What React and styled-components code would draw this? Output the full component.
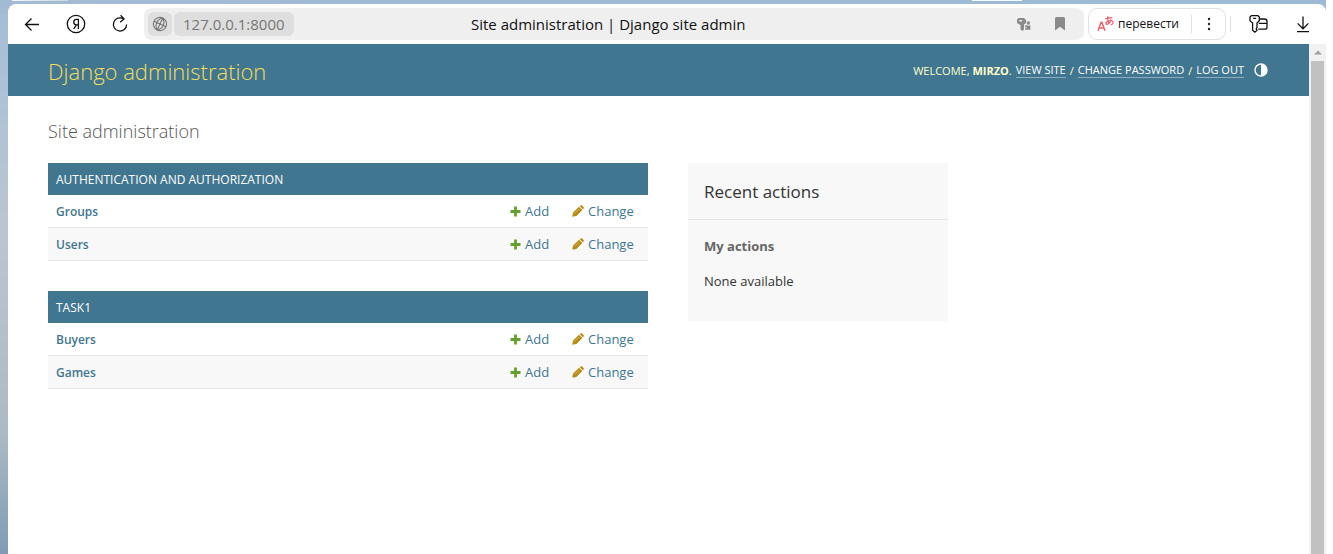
import React from "react";
import styled, { createGlobalStyle } from "styled-components";

const GlobalStyle = createGlobalStyle`
  *, *::before, *::after { box-sizing: border-box; }
  html, body { margin: 0; padding: 0; background: #fff; }
  body { font-family: "Open Sans", "Noto Sans", sans-serif; font-size: 13px; color: #333; }
  button, input { font: inherit; }
  h1, h2, h3, p { margin: 0; font-weight: 400; }
  a { text-decoration: none; }
`;

const Desktop = styled.div`
  display: flex;
  flex-direction: column;
  min-height: 100vh;
  margin-right: 7px;
  padding-left: 8px;
  background:
    linear-gradient(90deg, #a3bad3, #9cbad6) top / 100% 14px no-repeat,
    linear-gradient(180deg, #a3bcd6 0%, #aec2d6 18%, #bbc5cf 42%, #acbac3 78%, #7f9bb5 100%);
`;

const TabStrip = styled.div`
  display: flex;
  justify-content: space-between;
  height: 4px;
  padding: 0 304px 0 4px;
`;

const TabEdge = styled.span`
  width: ${(p) => p.$width}px;
  height: 1px;
  background: ${(p) => p.$fill};
`;

const BrowserWindow = styled.div`
  display: flex;
  flex: 1;
  flex-direction: column;
  overflow: hidden;
  border-radius: 8px 8px 0 0;
  background: #fff;
`;

const Toolbar = styled.div`
  display: flex;
  align-items: center;
  height: 40px;
  padding: 0 11px 0 12px;
`;

const IconButton = styled.button`
  display: flex;
  align-items: center;
  justify-content: center;
  flex: none;
  width: ${(p) => p.$width || 24}px;
  height: 24px;
  padding: 0;
  border: 0;
  background: none;
  color: ${(p) => p.$color || "#111"};
`;

const NavGroup = styled.div`
  display: flex;
  gap: 20px;
  margin-right: 12px;
`;

const AddressBar = styled.div`
  display: grid;
  grid-template-columns: 323px 1fr auto;
  align-items: center;
  flex: 1;
  height: 32px;
  padding: 0 12px 0 4px;
  border-radius: 8px;
  background: #efefef;
`;

const HostGroup = styled.div`
  display: flex;
  gap: 2px;
`;

const HostChip = styled.button`
  display: flex;
  align-items: center;
  justify-content: center;
  height: 24px;
  padding: 0 ${(p) => p.$pad}px;
  border: 0;
  border-radius: 6px;
  background: #dedede;
  color: #777;
  font-size: 15px;
  line-height: 24px;
`;

const PageTitle = styled.div`
  overflow: hidden;
  color: #111;
  font-size: 15px;
  line-height: 24px;
  white-space: nowrap;
`;

const AddressTools = styled.div`
  display: flex;
  gap: 12px;
`;

const TranslateBox = styled.div`
  display: flex;
  align-items: center;
  height: 32px;
  margin-left: 4px;
  border: 1px solid #e2e2e2;
  border-radius: 9px;
`;

const TranslateButton = styled.button`
  display: flex;
  align-items: center;
  gap: 4px;
  height: 18px;
  padding: 0 12px 0 8px;
  border: 0;
  border-right: 1px solid #e2e2e2;
  background: none;
  color: #111;
  font-size: 12px;
  line-height: 18px;
`;

const Separator = styled.span`
  width: 1px;
  height: 16px;
  margin: 0 16px 0 4px;
  background: #dcdcdc;
`;

const EndGroup = styled.div`
  display: flex;
  gap: 20px;
`;

const Viewport = styled.div`
  display: flex;
  flex: 1;
`;

const Page = styled.div`
  flex: 1;
  background: #fff;
`;

const ScrollBar = styled.div`
  display: flex;
  flex-direction: column;
  align-items: center;
  width: 17px;
  padding: 0 2px;
  background: #f1f1f1;
`;

const ScrollUp = styled.button`
  display: flex;
  align-items: center;
  justify-content: center;
  height: 17px;
  padding: 0;
  border: 0;
  background: none;
`;

const ScrollThumb = styled.div`
  flex: 1;
  align-self: stretch;
  background: #c1c1c1;
`;

const Header = styled.header`
  display: flex;
  align-items: center;
  justify-content: space-between;
  height: 52px;
  padding: 0 41px 0 40px;
  background: #417690;
  color: #ffc;
`;

const SiteName = styled.h1`
  padding-top: 2px;
  font-size: 22px;
  line-height: 32px;
  font-weight: 300;

  a { color: #f5dd5d; }
`;

const UserTools = styled.div`
  display: flex;
  align-items: center;
  gap: 4px;
  font-size: 11px;
  line-height: 15px;
  text-transform: uppercase;

  a {
    border-bottom: 1px solid #8badbd;
    color: #fff;
  }
`;

const ThemeToggle = styled.button`
  display: flex;
  margin-left: 6px;
  padding: 0;
  border: 0;
  background: none;
  color: #fff;
`;

const Content = styled.main`
  padding: 20px 40px;
`;

const ContentTitle = styled.h2`
  margin-bottom: 17px;
  color: #555;
  font-size: 18px;
  font-weight: 300;
  line-height: 30px;
`;

const Columns = styled.div`
  display: flex;
  align-items: flex-start;
  gap: 40px;
`;

const AppList = styled.div`
  display: flex;
  flex-direction: column;
  gap: 30px;
  width: 600px;
`;

const AppTable = styled.table`
  width: 100%;
  border-collapse: separate;
  border-spacing: 0;
  table-layout: fixed;

  caption {
    height: 32px;
    padding: 1px 8px 0;
    background: #417690;
    color: #fff;
    font-size: 12px;
    font-weight: 500;
    line-height: 31px;
    text-align: left;
    text-transform: uppercase;
  }
`;

const ModelRow = styled.tr`
  height: 33px;
  background: #fff;

  &:nth-child(even) { background: #f8f8f8; }

  th, td {
    padding: 0 8px;
    border-bottom: 1px solid #e8e8e8;
    line-height: 20px;
    text-align: left;
  }
  th a { color: #417690; font-size: 12px; font-weight: 600; }
`;

const ActionCell = styled.td`
  width: ${(p) => p.$width}px;
`;

const ActionLink = styled.a`
  display: flex;
  align-items: center;
  gap: 4px;
  color: #417690;
`;

const Sidebar = styled.aside`
  width: 260px;
  padding-bottom: 14px;
  background: #f8f8f8;
`;

const SidebarTitle = styled.h2`
  padding: 17px 16px 15px;
  border-bottom: 1px solid #e6e6e6;
  font-size: 17px;
  font-weight: 400;
  line-height: 24px;
`;

const SidebarBody = styled.div`
  padding: 16px;

  h3 {
    margin-bottom: 15px;
    color: #666;
    font-size: 13px;
    font-weight: 700;
    line-height: 20px;
  }
  p { line-height: 20px; }
`;

const Stroke = ({ size = 20, width = 1.3, children }) => (
  <svg width={size} height={size} viewBox={`0 0 ${size} ${size}`} fill="none" stroke="currentColor" strokeWidth={width} aria-hidden="true">
    {children}
  </svg>
);

const BackIcon = () => (
  <Stroke><path d="M17 10.5H3.8M9.5 4.5l-6 6 6 6" /></Stroke>
);
const YandexIcon = () => (
  <Stroke>
    <circle cx="10" cy="10" r="8.7" />
    <path d="M12.4 15V5.3h-1.6c-2 0-3.1 1.2-3.1 2.8 0 1.7 1.1 2.7 2.7 2.7h2M10.4 10.8L7.6 15" />
  </Stroke>
);
const ReloadIcon = () => (
  <Stroke><path d="M13.4 4.8A6.6 6.6 0 1 0 16.6 10.4M10.6 1.2l3.4 3.7-3.8 3.4" /></Stroke>
);
const GlobeIcon = () => (
  <Stroke size={16} width={1.1}>
    <g transform="rotate(25 8 8)">
      <circle cx="8" cy="8" r="6.6" />
      <path d="M8 1.4v13.2M1.4 8h13.2M8 1.4C3.2 5 3.2 11 8 14.6M8 1.4c4.8 3.6 4.8 9.6 0 13.2" />
    </g>
  </Stroke>
);
const KeySmallIcon = () => (
  <svg width="16" height="16" viewBox="0 0 16 16" fill="currentColor" aria-hidden="true">
    <path fillRule="evenodd" d="M2.5 2H8l2 2v3L8 8.6v5L6.3 15 4.5 13.6V9L1 7V3.6zM3.4 4v1.4h2.8V4z" />
    <path d="M10.8 5.4h3v3h-3zM9 9.4h5.4v4.4H9v-1.6h1.6v-1H9z" />
  </svg>
);
const BookmarkIcon = () => (
  <svg width="16" height="16" viewBox="0 0 16 16" fill="currentColor" aria-hidden="true">
    <path d="M3 2.5Q3 1 4.5 1h7Q13 1 13 2.5V14.5L8 10.8 3 14.5z" />
  </svg>
);
const TranslateIcon = () => (
  <svg width="17" height="18" viewBox="0 0 17 18" fill="none" stroke="#ec5f6d" strokeWidth="1.2" aria-hidden="true">
    <path strokeWidth="1.5" d="M1 15.8l3.2-8.6h.6L8 15.8M2 13h5" />
    <path d="M8.3 3.6l7-.9M10.8 1.2c-.2 3 0 5.2 1 8M14 4.4c-.6 2.8-2.2 4.6-4 4.9-1.8.2-1.4-2.6 1.6-3.5 2.7-.8 4.8.2 4.4 2-.2 1-1 1.7-2.2 2" />
  </svg>
);
const DotsIcon = () => (
  <svg width="4" height="14" viewBox="0 0 4 14" fill="#222" aria-hidden="true">
    <circle cx="2" cy="2" r="1.2" /><circle cx="2" cy="7" r="1.2" /><circle cx="2" cy="12" r="1.2" />
  </svg>
);
const PasswordsIcon = () => (
  <Stroke>
    <path d="M8 9l2.3-2.2V3L9 1.7H2.4L1 3v3.8L3.6 9v7.2l2.2 2L8 16.4l-.8-1.6L8 13.4z" />
    <path d="M4.2 4.3h3M11 5h4.4Q18 5 18 7.4v5.8q0 2-2 2H9.2M9.8 9.3H18" />
  </Stroke>
);
const DownloadIcon = () => (
  <Stroke><path d="M10 2.6v12M4.6 9.4L10 14.8l5.4-5.4M4 17.6h12" /></Stroke>
);
const ContrastIcon = () => (
  <svg width="14" height="14" viewBox="0 0 14 14" aria-hidden="true">
    <circle cx="7" cy="7" r="6" fill="none" stroke="#fff" strokeWidth="1.4" />
    <path d="M7 1a6 6 0 0 1 0 12z" fill="#fff" />
  </svg>
);
const PlusIcon = () => (
  <svg width="11" height="11" viewBox="0 0 11 11" aria-hidden="true">
    <path d="M5.5 0.5v10M0.5 5.5h10" stroke="#65a02d" strokeWidth="2.8" />
  </svg>
);
const PencilIcon = () => (
  <svg width="12" height="12" viewBox="0 0 12 12" aria-hidden="true">
    <path d="M.2 11.8l.9-4.2 5.9-5.9 3.3 3.3-5.9 5.9z" fill="#b78b13" />
    <path d="M7.7 1.2L8.6.4q.7-.6 1.4 0l1.6 1.6q.6.7 0 1.4l-.8.9z" fill="#b78b13" />
    <path d="M2.4 8.7l5-5" stroke="#dfc57b" strokeWidth=".7" />
  </svg>
);

const apps = [
  { name: "Authentication and Authorization", models: ["Groups", "Users"] },
  { name: "Task1", models: ["Buyers", "Games"] },
];

function BrowserToolbar() {
  return (
    <Toolbar>
      <NavGroup>
        <IconButton aria-label="Back"><BackIcon /></IconButton>
        <IconButton aria-label="Home"><YandexIcon /></IconButton>
        <IconButton aria-label="Reload"><ReloadIcon /></IconButton>
      </NavGroup>
      <AddressBar>
        <HostGroup>
          <HostChip $pad={4} aria-label="Site information"><GlobeIcon /></HostChip>
          <HostChip $pad={9}>127.0.0.1:8000</HostChip>
        </HostGroup>
        <PageTitle>Site administration | Django site admin</PageTitle>
        <AddressTools>
          <IconButton $color="#8a8a8a" aria-label="Saved passwords"><KeySmallIcon /></IconButton>
          <IconButton $color="#8a8a8a" aria-label="Bookmark"><BookmarkIcon /></IconButton>
        </AddressTools>
      </AddressBar>
      <TranslateBox>
        <TranslateButton><TranslateIcon />перевести</TranslateButton>
        <IconButton $width={33} aria-label="Translation options"><DotsIcon /></IconButton>
      </TranslateBox>
      <Separator />
      <EndGroup>
        <IconButton aria-label="Passwords"><PasswordsIcon /></IconButton>
        <IconButton aria-label="Downloads"><DownloadIcon /></IconButton>
      </EndGroup>
    </Toolbar>
  );
}

function AdminHeader() {
  return (
    <Header>
      <SiteName><a href="#home">Django administration</a></SiteName>
      <UserTools>
        <span>Welcome, <strong>Mirzo</strong>.</span>
        <a href="#site">View site</a>
        <span>/</span>
        <a href="#password">Change password</a>
        <span>/</span>
        <a href="#logout">Log out</a>
        <ThemeToggle aria-label="Toggle theme"><ContrastIcon /></ThemeToggle>
      </UserTools>
    </Header>
  );
}

function AppModule({ name, models }) {
  return (
    <AppTable>
      <caption>{name}</caption>
      <tbody>
        {models.map((model) => (
          <ModelRow key={model}>
            <th scope="row"><a href={`#${model}`}>{model}</a></th>
            <ActionCell $width={62}><ActionLink href={`#${model}-add`}><PlusIcon />Add</ActionLink></ActionCell>
            <ActionCell $width={84}><ActionLink href={`#${model}-change`}><PencilIcon />Change</ActionLink></ActionCell>
          </ModelRow>
        ))}
      </tbody>
    </AppTable>
  );
}

export default function App() {
  return (
    <>
      <GlobalStyle />
      <Desktop>
        <TabStrip>
          <TabEdge $width={56} $fill="linear-gradient(90deg, #f4f7fa, #c8d6e4)" />
          <TabEdge $width={50} $fill="#f6f9fb" />
        </TabStrip>
        <BrowserWindow>
          <BrowserToolbar />
          <Viewport>
            <Page>
              <AdminHeader />
              <Content>
                <ContentTitle>Site administration</ContentTitle>
                <Columns>
                  <AppList>
                    {apps.map((app) => <AppModule key={app.name} {...app} />)}
                  </AppList>
                  <Sidebar>
                    <SidebarTitle>Recent actions</SidebarTitle>
                    <SidebarBody>
                      <h3>My actions</h3>
                      <p>None available</p>
                    </SidebarBody>
                  </Sidebar>
                </Columns>
              </Content>
            </Page>
            <ScrollBar>
              <ScrollUp aria-label="Scroll up">
                <svg width="8" height="5" viewBox="0 0 8 5" aria-hidden="true"><path d="M0 4.5L4 .5l4 4z" fill="#a0a0a0" /></svg>
              </ScrollUp>
              <ScrollThumb />
            </ScrollBar>
          </Viewport>
        </BrowserWindow>
      </Desktop>
    </>
  );
}
